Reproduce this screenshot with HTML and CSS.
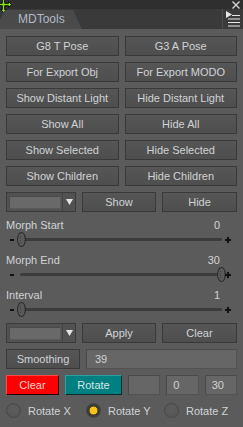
FILE: index.html
```html
<!DOCTYPE html>
<html lang="en">
<head>
    <meta charset="UTF-8">
    <meta name="viewport" content="width=device-width, initial-scale=1.0">
    <title>MDTools</title>
    <link rel="stylesheet" href="styles.css">
</head>
<body>
    <div class="window">
        <svg class="move-icon" width="13" height="13" viewBox="0 0 13 13">
            <polygon points="2.3,-0.5 0.5,-0.5 3.5,-3.5 6.5,-0.5 4.7,-0.5 4.7,3.3 8.5,3.3 8.5,1.5 11.5,4.5 8.5,7.5 8.5,5.7 4.7,5.7 4.7,9.5 6.5,9.5 3.5,12.5 0.5,9.5 2.3,9.5 2.3,5.7 -1.5,5.7 -1.5,7.5 -4.5,4.5 -1.5,1.5 -1.5,3.3 2.3,3.3" fill="#86e01c" stroke="#111" stroke-width="1"/>
        </svg>

        <div class="titlebar">
            <svg width="8" height="8" viewBox="0 0 8 8">
                <path d="M0.5 0.5 L7.5 7.5 M7.5 0.5 L0.5 7.5" stroke="#d6d6d6" stroke-width="1.4"/>
            </svg>
        </div>

        <div class="tabbar">
            <div class="tab">MDTools</div>
            <div class="tab-menu">
                <svg width="16" height="17" viewBox="0 0 16 17">
                    <polygon points="1,0 7,3.5 1,7" fill="#e8e8e8"/>
                    <path d="M7 4.5 H15 M3 8 H15 M3 11.5 H15 M3 15 H15" stroke="#e8e8e8" stroke-width="1"/>
                </svg>
            </div>
        </div>

        <div class="panel">
            <div class="row2">
                <button class="btn">G8 T Pose</button>
                <button class="btn">G3 A Pose</button>
            </div>
            <div class="row2">
                <button class="btn">For Export Obj</button>
                <button class="btn">For Export MODO</button>
            </div>
            <div class="row2">
                <button class="btn">Show Distant Light</button>
                <button class="btn">Hide Distant Light</button>
            </div>
            <div class="row2">
                <button class="btn">Show All</button>
                <button class="btn">Hide All</button>
            </div>
            <div class="row2">
                <button class="btn">Show Selected</button>
                <button class="btn">Hide Selected</button>
            </div>
            <div class="row2">
                <button class="btn">Show Children</button>
                <button class="btn">Hide Children</button>
            </div>
            <div class="row3">
                <div class="combo">
                    <span class="combo-field"></span>
                    <span class="combo-arrow">
                        <svg width="7" height="6" viewBox="0 0 7 6"><polygon points="0,0 7,0 3.5,6" fill="#e4e4e4"/></svg>
                    </span>
                </div>
                <button class="btn">Show</button>
                <button class="btn">Hide</button>
            </div>

            <div class="params">
                <div class="param">
                    <div class="param-head"><span>Morph Start</span><span>0</span></div>
                    <div class="slider">
                        <span class="minus"></span>
                        <div class="track"><span class="thumb" style="--pos: 0"></span></div>
                        <span class="plus"></span>
                    </div>
                </div>
                <div class="param">
                    <div class="param-head"><span>Morph End</span><span>30</span></div>
                    <div class="slider">
                        <span class="minus"></span>
                        <div class="track"><span class="thumb" style="--pos: 1"></span></div>
                        <span class="plus"></span>
                    </div>
                </div>
                <div class="param">
                    <div class="param-head"><span>Interval</span><span>1</span></div>
                    <div class="slider">
                        <span class="minus"></span>
                        <div class="track"><span class="thumb" style="--pos: 0"></span></div>
                        <span class="plus"></span>
                    </div>
                </div>
            </div>

            <div class="row3">
                <div class="combo">
                    <span class="combo-field"></span>
                    <span class="combo-arrow">
                        <svg width="7" height="6" viewBox="0 0 7 6"><polygon points="0,0 7,0 3.5,6" fill="#e4e4e4"/></svg>
                    </span>
                </div>
                <button class="btn">Apply</button>
                <button class="btn">Clear</button>
            </div>

            <div class="smooth-row">
                <button class="btn">Smoothing</button>
                <div class="field field-wide">39</div>
            </div>

            <div class="rotate-row">
                <button class="btn btn-red">Clear</button>
                <button class="btn btn-teal">Rotate</button>
                <div class="field"></div>
                <div class="field">0</div>
                <div class="field">30</div>
            </div>

            <div class="radio-row">
                <div class="radio"><span class="radio-dot"></span>Rotate X</div>
                <div class="radio"><span class="radio-dot checked"></span>Rotate Y</div>
                <div class="radio"><span class="radio-dot"></span>Rotate Z</div>
            </div>
        </div>
    </div>
</body>
</html>
```

FILE: styles.css
```css
* {
    box-sizing: border-box;
}

body {
    margin: 0;
    background: #5b5b5b;
    font-family: "Liberation Sans", Arial, sans-serif;
    font-size: 11px;
    color: #d0d3d6;
}

.window {
    position: relative;
    width: 243px;
    height: 427px;
    overflow: hidden;
    background: #5b5b5b;
}

.move-icon {
    position: absolute;
    left: 0;
    top: 0;
}

.titlebar {
    height: 9px;
    background: #2f2f2f;
    display: flex;
    justify-content: flex-end;
    align-items: center;
    padding-right: 3px;
}

.tabbar {
    height: 20px;
    background: #3a3a3a;
    display: flex;
    align-items: flex-end;
}

.tab {
    width: 82px;
    height: 19px;
    background: #4a4a4a;
    clip-path: polygon(5px 0, 73px 0, 82px 100%, 0 100%, 0 10px);
    color: #b0b9c9;
    font-size: 12px;
    line-height: 19px;
    padding-left: 18px;
}

.tab-menu {
    margin-left: auto;
    width: 21px;
    height: 20px;
    border-left: 1px solid #4d4d4d;
    display: flex;
    align-items: center;
    justify-content: center;
}

.panel {
    padding: 7px 6px 0;
    display: flex;
    flex-direction: column;
    gap: 6px;
}

.row2 {
    display: grid;
    grid-template-columns: 1fr 1fr;
    gap: 6px;
}

.row3 {
    display: grid;
    grid-template-columns: 70px 74px 1fr;
    gap: 6px;
}

.btn {
    height: 20px;
    padding: 0;
    background: linear-gradient(#565656, #4e4e4e);
    border: 1px solid #393939;
    color: #d0d3d6;
    font: inherit;
    display: flex;
    align-items: center;
    justify-content: center;
}

.btn-red {
    background: #ff0000;
    border-color: #ff4a4a #2a0000 #2a0000 #ff4a4a;
    color: #ffd0d0;
}

.btn-teal {
    background: #008080;
    border-color: #2aa0a0 #0a2a2a #0a2a2a #2aa0a0;
    color: #d6e6e6;
}

.combo {
    height: 20px;
    background: #525252;
    border: 1px solid #3a3a3a;
    display: flex;
    align-items: center;
    padding-left: 2px;
}

.combo-field {
    width: 52px;
    height: 13px;
    background: #696969;
    border: 1px solid #5a5a5a;
    border-top-color: #4a4a4a;
    border-left-color: #4a4a4a;
}

.combo-arrow {
    flex: 1;
    height: 18px;
    border-left: 1px solid #444;
    display: flex;
    align-items: center;
    justify-content: center;
    margin-left: 1px;
}

/* sliders */
.params {
    display: flex;
    flex-direction: column;
    gap: 6px;
    margin: 1px 0 -1px;
}

.param-head {
    display: flex;
    justify-content: space-between;
    line-height: 13px;
    padding-right: 17px;
}

.slider {
    display: flex;
    align-items: center;
    height: 16px;
}

.minus {
    width: 4px;
    height: 2px;
    background: #111;
    margin: 0 2px 0 4px;
}

.track {
    position: relative;
    flex: 1;
    height: 16px;
}

.track::before {
    content: "";
    position: absolute;
    left: 4px;
    right: 4px;
    top: 6px;
    height: 3px;
    border-radius: 2px;
    background: #3c3c3c;
}

.thumb {
    position: absolute;
    top: 0;
    left: calc(var(--pos) * (100% - 10px) + 1px);
    width: 9px;
    height: 15px;
    border-radius: 50%;
    background: #5a5a5a;
    border: 1px solid #2b2b2b;
}

.thumb::after {
    content: "";
    position: absolute;
    left: 2px;
    top: 3px;
    bottom: 3px;
    width: 3px;
    border-left: 1px dotted #3a3a3a;
    border-right: 1px dotted #3a3a3a;
}

.plus {
    position: relative;
    width: 6px;
    height: 6px;
    margin: 0 6px 0 -1px;
}

.plus::before,
.plus::after {
    content: "";
    position: absolute;
    background: #111;
}

.plus::before {
    left: 0;
    top: 2px;
    width: 6px;
    height: 2px;
}

.plus::after {
    left: 2px;
    top: 0;
    width: 2px;
    height: 6px;
}

.smooth-row {
    display: grid;
    grid-template-columns: 74px 1fr;
    gap: 6px;
}

.rotate-row {
    display: grid;
    grid-template-columns: 53px 57px 1fr 1fr 1fr;
    gap: 6px;
}

.field {
    height: 20px;
    background: #666;
    border: 1px solid #525252;
    border-top-color: #4a4a4a;
    border-left-color: #4a4a4a;
    line-height: 18px;
    padding-left: 6px;
    color: #d0d3d6;
}

.field-wide {
    padding-left: 8px;
}

.radio-row {
    display: grid;
    grid-template-columns: 80px 78px 1fr;
    margin-top: 2px;
}

.radio {
    display: flex;
    align-items: center;
    gap: 7px;
    height: 15px;
}

.radio-dot {
    width: 15px;
    height: 15px;
    border-radius: 50%;
    background: radial-gradient(circle at 50% 40%, #5e5e5e, #545454);
    border: 1px solid #464646;
}

.radio-dot.checked {
    background: radial-gradient(circle, #f4c21c 0, #f4c21c 3.6px, #5a4a10 4.2px, #3a3a3a 4.8px, #3a3a3a 100%);
    border-color: #444;
}
```
